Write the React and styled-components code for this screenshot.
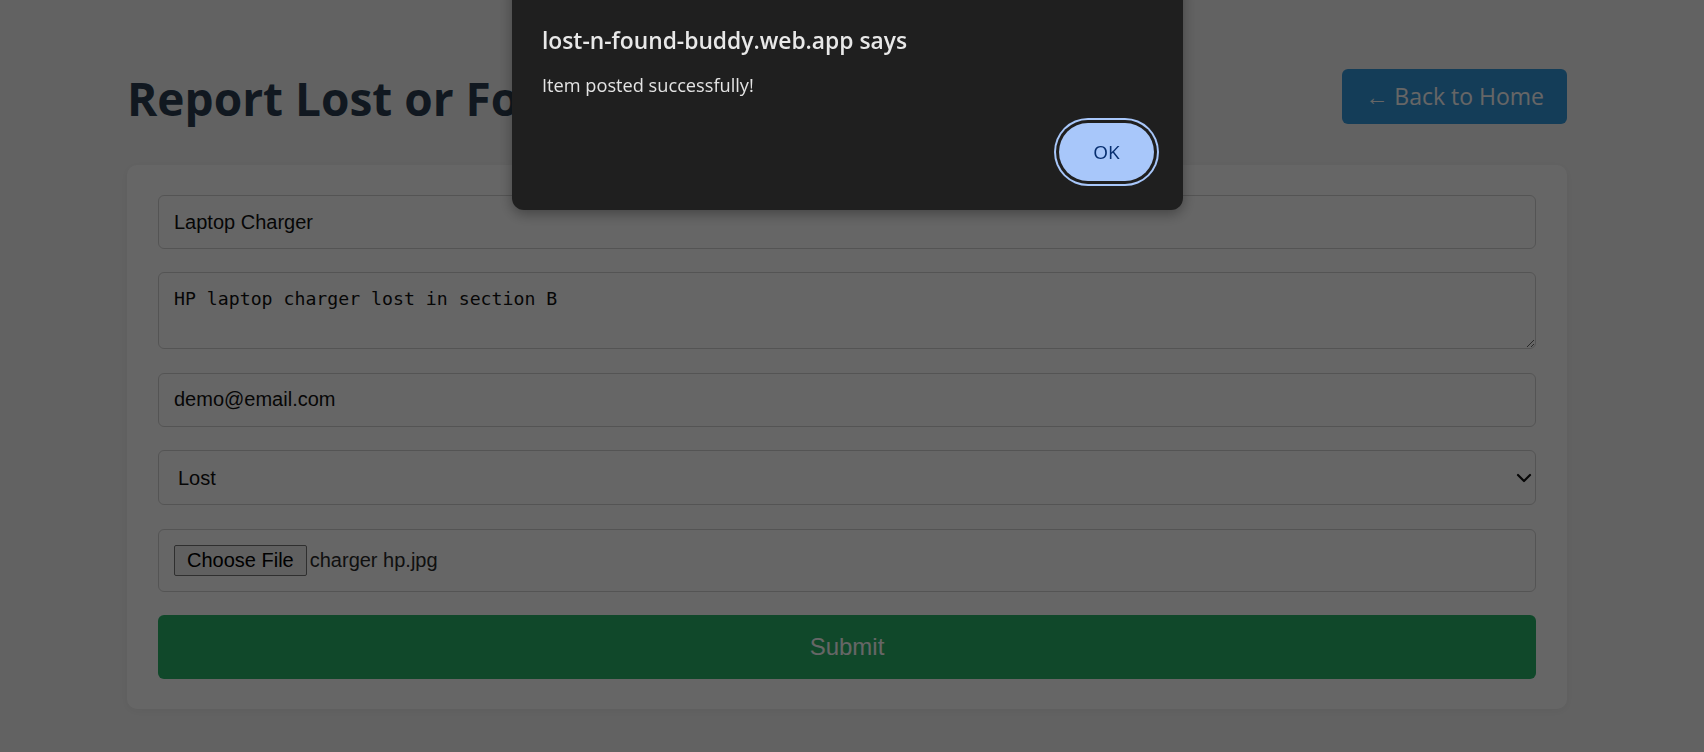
import React from 'react';
import styled, { createGlobalStyle } from 'styled-components';
import { ChevronDown } from 'lucide-react';

const GlobalStyle = createGlobalStyle`
    body {
        margin: 0;
        background-color: #f5f5f5;
        font-family: "Open Sans", "Noto Sans", sans-serif;
    }
`

class App extends React.Component {
    render() {
        return (
            <Page>
                <GlobalStyle />
                <Container>
                    <Header>
                        <Title>Report Lost or Found Item</Title>
                        <BackLink href="#">← Back to Home</BackLink>
                    </Header>

                    <FormCard>
                        <TextField type="text" defaultValue="Laptop Charger" />
                        <TextArea defaultValue="HP laptop charger lost in section B" />
                        <TextField type="email" defaultValue="demo@email.com" />
                        <SelectWrap>
                            <SelectField defaultValue="lost">
                                <option value="lost">Lost</option>
                                <option value="found">Found</option>
                            </SelectField>
                            <Chevron><ChevronDown size={24} strokeWidth={2.2} /></Chevron>
                        </SelectWrap>
                        <FileField>
                            <ChooseButton type="button">Choose File</ChooseButton>
                            <FileName>charger hp.jpg</FileName>
                        </FileField>
                        <SubmitButton type="button">Submit</SubmitButton>
                    </FormCard>
                </Container>

                <Overlay />
                <AlertBox>
                    <AlertTitle>lost-n-found-buddy.web.app says</AlertTitle>
                    <AlertMessage>Item posted successfully!</AlertMessage>
                    <AlertActions>
                        <OkButton type="button">OK</OkButton>
                    </AlertActions>
                </AlertBox>
            </Page>
        );
    }
}

const Page = styled.div`
    min-height: 100vh;
    background-color: #f5f5f5;
    padding-top: 63px;
    box-sizing: border-box;
`
const Container = styled.div`
    width: 1440px;
    margin-left: 127px;
`
const Header = styled.div`
    display: flex;
    justify-content: space-between;
    align-items: center;
    margin-bottom: 36px;
`
const Title = styled.h1`
    margin: 0;
    font-size: 46px;
    font-weight: 700;
    color: #2c3e50;
    line-height: 66px;
    position: relative;
    top: 2px;
`
const BackLink = styled.a`
    display: flex;
    align-items: center;
    height: 55px;
    padding: 0 23px;
    box-sizing: border-box;
    background-color: #3498db;
    color: #fff;
    border-radius: 6px;
    font-size: 23px;
    text-decoration: none;
`
const FormCard = styled.div`
    display: flex;
    flex-direction: column;
    gap: 23.4px;
    background-color: #fff;
    border-radius: 10px;
    padding: 30px 31px;
    box-shadow: 0 2px 10px rgba(0, 0, 0, 0.05);
`
const fieldBase = `
    width: 100%;
    box-sizing: border-box;
    border: 1px solid #d2d2d2;
    border-radius: 6px;
    background-color: #fff;
    color: #111;
    font-family: "Liberation Sans", Arial, sans-serif;
    font-size: 20px;
    outline: none;
`
const TextField = styled.input`
    ${fieldBase}
    height: 54px;
    padding: 0 15px;
`
const TextArea = styled.textarea`
    ${fieldBase}
    height: 77px;
    padding: 14px 15px;
    font-family: "DejaVu Sans Mono", "Liberation Mono", monospace;
    font-size: 18.2px;
    line-height: 23px;
    resize: vertical;
`
const SelectWrap = styled.div`
    position: relative;
`
const SelectField = styled.select`
    ${fieldBase}
    height: 55px;
    padding: 0 40px 0 19px;
    appearance: none;
    display: block;
`
const Chevron = styled.span`
    position: absolute;
    right: 0;
    top: 50%;
    transform: translateY(-50%);
    display: flex;
    color: #111;
    pointer-events: none;
`
const FileField = styled.div`
    ${fieldBase}
    height: 63px;
    padding: 0 15px;
    display: flex;
    align-items: center;
    gap: 3px;
    color: #2a2a2a;
`
const ChooseButton = styled.button`
    height: 31px;
    padding: 0 12px;
    background-color: #efefef;
    border: 1px solid #767676;
    border-radius: 2px;
    font-family: "Liberation Sans", Arial, sans-serif;
    font-size: 20px;
    color: #000;
`
const FileName = styled.span`
    font-size: 20px;
`
const SubmitButton = styled.button`
    height: 64px;
    border: none;
    border-radius: 6px;
    background-color: #28b46a;
    color: #fff;
    font-family: "Liberation Sans", Arial, sans-serif;
    font-size: 24px;
`
const Overlay = styled.div`
    position: fixed;
    inset: 0;
    background-color: rgba(0, 0, 0, 0.6);
`
const AlertBox = styled.div`
    position: fixed;
    top: -20px;
    left: calc(50% - 340px);
    width: 671px;
    height: 230px;
    box-sizing: border-box;
    padding: 46px 24px 24px 30px;
    background-color: #1f1f1f;
    border-radius: 12px;
    box-shadow: 0 4px 14px rgba(0, 0, 0, 0.35);
    display: flex;
    flex-direction: column;
`
const AlertTitle = styled.div`
    font-size: 22.8px;
    font-weight: 600;
    color: #e8e8e8;
    line-height: 30px;
`
const AlertMessage = styled.div`
    margin-top: 16px;
    font-size: 18.2px;
    color: #e3e3e3;
    line-height: 26px;
`
const AlertActions = styled.div`
    margin-top: auto;
    display: flex;
    justify-content: flex-end;
`
const OkButton = styled.button`
    width: 95px;
    height: 58px;
    margin: 5px;
    border: none;
    border-radius: 29px;
    background-color: #a8c7fa;
    color: #062e6f;
    font-family: "Open Sans", sans-serif;
    font-size: 19px;
    font-weight: 500;
    box-shadow: 0 0 0 3px #1f1f1f, 0 0 0 5px #a8c7fa;
`

export default App;
